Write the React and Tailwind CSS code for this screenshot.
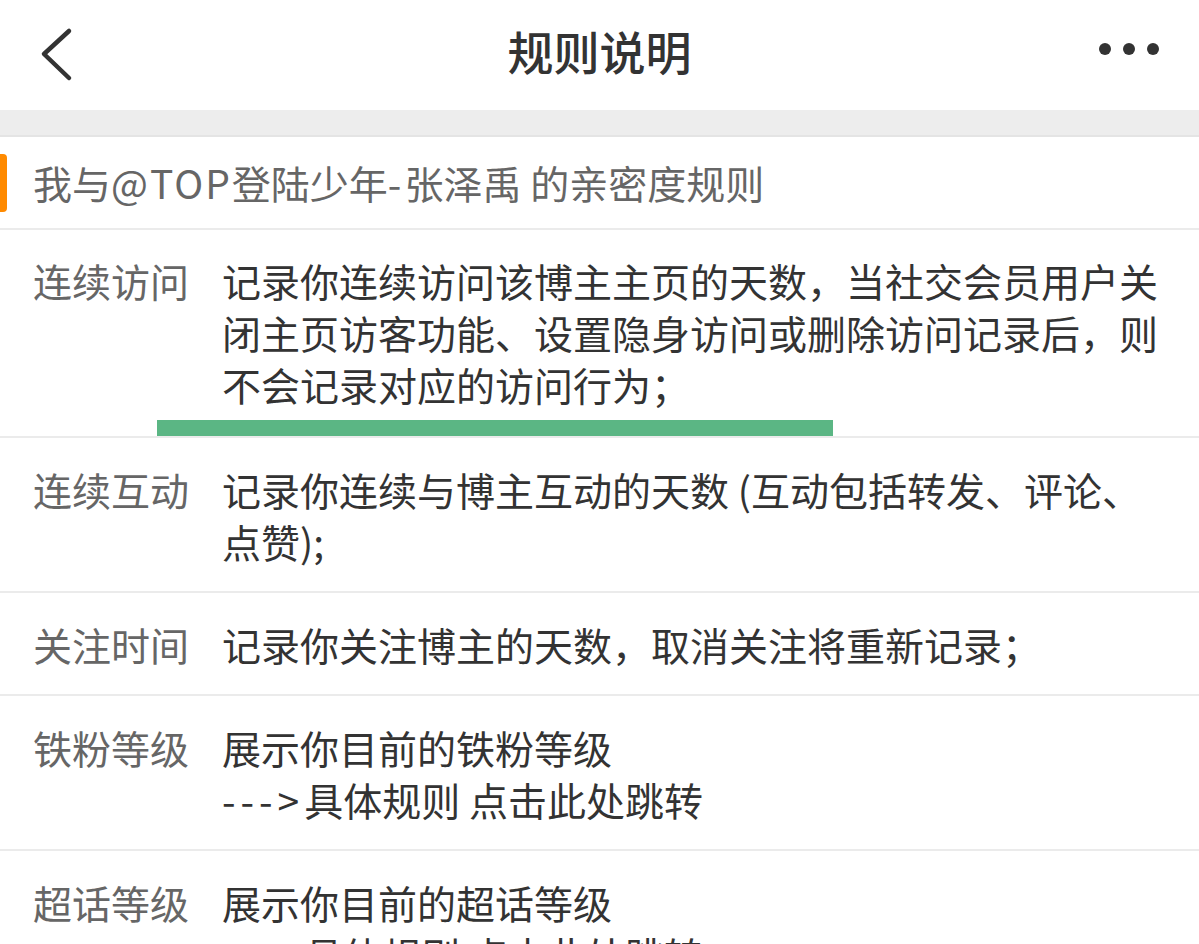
import React from 'react';

const Arrow = () => <span className="tracking-[5px]">---&gt;</span>;

const rows = [
  {
    label: '连续访问',
    lines: ['记录你连续访问该博主主页的天数，当社交会员用户关闭主页访客功能、设置隐身访问或删除访问记录后，则不会记录对应的访问行为；'],
    marked: true,
  },
  {
    label: '连续互动',
    lines: ['记录你连续与博主互动的天数 (互动包括转发、评论、点赞);'],
  },
  {
    label: '关注时间',
    lines: ['记录你关注博主的天数，取消关注将重新记录；'],
  },
  {
    label: '铁粉等级',
    lines: ['展示你目前的铁粉等级', <><Arrow />具体规则 点击此处跳转</>],
  },
  {
    label: '超话等级',
    lines: ['展示你目前的超话等级', <><Arrow />具体规则 点击此处跳转</>],
  },
];

const App = () => {
  return (
    <div
      className="w-[1199px] h-[944px] overflow-hidden bg-white text-[#333]"
      style={{ fontFamily: '"Noto Sans CJK SC", "Noto Sans", sans-serif' }}
    >
      {/* Top bar */}
      <div className="h-[110px] flex items-center px-[36px] bg-white">
        <div className="flex-1 flex">
          <svg width="36" height="56" viewBox="0 0 36 56" className="ml-[2px]">
            <path d="M31 4 L6 27 L31 51" fill="none" stroke="#333" strokeWidth="4.5" strokeLinecap="round" strokeLinejoin="round" />
          </svg>
        </div>
        <h1 className="text-[46px] font-medium text-[#333] -mt-[10px]">规则说明</h1>
        <div className="flex-1 flex justify-end">
          <div className="flex items-center gap-[12px] mr-[4px] -mt-[12px]">
            <span className="w-[12px] h-[12px] rounded-full bg-[#333]" />
            <span className="w-[12px] h-[12px] rounded-full bg-[#333]" />
            <span className="w-[12px] h-[12px] rounded-full bg-[#333]" />
          </div>
        </div>
      </div>

      {/* Gray band */}
      <div className="h-[27px] bg-[#ededed] border-b-2 border-[#e4e4e4]" />

      {/* Section title */}
      <div className="h-[93px] flex items-center border-b-2 border-[#ebebeb]">
        <div className="w-[7px] h-[58px] rounded-r-[4px] bg-[#ff8a00]" />
        <p className="ml-[26px] text-[39px] text-[#666] leading-none">
          我与<span className="tracking-[2px]">@TOP</span>登陆少年<span className="tracking-[3px]">-</span>张泽禹 的亲密度规则
        </p>
      </div>

      {/* Rules */}
      {rows.map((row, index) => (
        <div key={index} className={`border-b-2 border-[#ebebeb] ${row.marked ? 'pt-[24px]' : 'pt-[25px] pb-[24px]'}`}>
          <div className="flex pl-[33px] pr-[30px]">
            <div className="w-[189px] shrink-0 text-[39px] leading-[52px] text-[#666]">{row.label}</div>
            <div className="flex-1 text-[39px] leading-[52px] text-[#333]">
              {row.lines.map((line, i) => (
                <p key={i}>{line}</p>
              ))}
            </div>
          </div>
          {row.marked && <div className="ml-[157px] mt-[10px] w-[676px] h-[16px] bg-[#5bb684]" />}
        </div>
      ))}
    </div>
  );
};

export default App;
